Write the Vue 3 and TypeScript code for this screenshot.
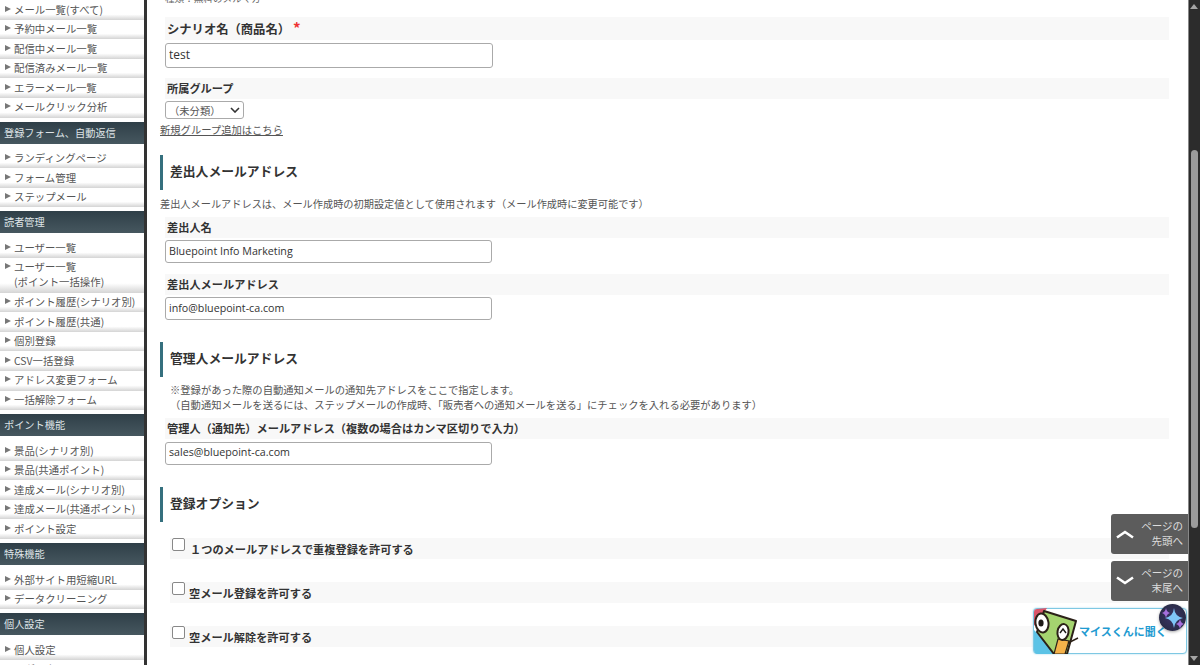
<script setup lang="ts">
type Group = { title?: string; items: string[][] }
const groups: Group[] = [
  { items: [['メール一覧(すべて)'], ['予約中メール一覧'], ['配信中メール一覧'], ['配信済みメール一覧'], ['エラーメール一覧'], ['メールクリック分析']] },
  { title: '登録フォーム、自動返信', items: [['ランディングページ'], ['フォーム管理'], ['ステップメール']] },
  { title: '読者管理', items: [['ユーザー一覧'], ['ユーザー一覧', '(ポイント一括操作)'], ['ポイント履歴(シナリオ別)'], ['ポイント履歴(共通)'], ['個別登録'], ['CSV一括登録'], ['アドレス変更フォーム'], ['一括解除フォーム']] },
  { title: 'ポイント機能', items: [['景品(シナリオ別)'], ['景品(共通ポイント)'], ['達成メール(シナリオ別)'], ['達成メール(共通ポイント)'], ['ポイント設定']] },
  { title: '特殊機能', items: [['外部サイト用短縮URL'], ['データクリーニング']] },
  { title: '個人設定', items: [['個人設定'], ['ログアウト']] }
]
const options = ['１つのメールアドレスで重複登録を許可する', '空メール登録を許可する', '空メール解除を許可する']
</script>

<template>
  <div class="page">
    <aside class="side">
      <section v-for="(g, i) in groups" :key="i">
        <h3 v-if="g.title" class="side-head">{{ g.title }}</h3>
        <ul class="side-list">
          <li v-for="(it, j) in g.items" :key="j" class="side-item">
            <span class="tri"></span>
            <span class="side-text"><span v-for="l in it" :key="l" class="line">{{ l }}</span></span>
          </li>
        </ul>
      </section>
    </aside>

    <main class="main">
      <p class="clipped">種類：無料のメルマガ</p>

      <div class="label first"><b>シナリオ名（商品名）</b><span class="req">*</span></div>
      <input class="field big" value="test" />

      <div class="label group"><b>所属グループ</b></div>
      <div class="select">（未分類）
        <svg width="10" height="6" viewBox="0 0 10 6"><path d="M1 1l4 4 4-4" fill="none" stroke="#333" stroke-width="1.6" /></svg>
      </div>
      <a class="link">新規グループ追加はこちら</a>

      <h2 class="sec s1">差出人メールアドレス</h2>
      <p class="note n1">差出人メールアドレスは、メール作成時の初期設定値として使用されます（メール作成時に変更可能です）</p>
      <div class="label small"><b>差出人名</b></div>
      <input class="field" value="Bluepoint Info Marketing" />
      <div class="label small next"><b>差出人メールアドレス</b></div>
      <input class="field" value="info@bluepoint-ca.com" />

      <h2 class="sec s2">管理人メールアドレス</h2>
      <p class="note n2">※登録があった際の自動通知メールの通知先アドレスをここで指定します。<br />（自動通知メールを送るには、ステップメールの作成時、「販売者への通知メールを送る」にチェックを入れる必要があります）</p>
      <div class="label small"><b>管理人（通知先）メールアドレス（複数の場合はカンマ区切りで入力）</b></div>
      <input class="field mgr" value="sales@bluepoint-ca.com" />

      <h2 class="sec s3">登録オプション</h2>
      <div class="opts">
        <div v-for="(o, i) in options" :key="o" class="opt">
          <span class="check"></span>
          <b class="opt-label" :class="{ wide: i === 0 }">{{ o }}</b>
        </div>
      </div>
    </main>

    <div class="scrollbar">
      <span class="arrow up"></span>
      <span class="thumb"></span>
      <span class="arrow down"></span>
    </div>

    <div class="jump top-j">
      <svg width="18" height="10" viewBox="0 0 18 10"><path d="M1 8.5L9 3l8 5.5" fill="none" stroke="#fff" stroke-width="2.6" /></svg>
      <span class="jump-text">ページの<br />先頭へ</span>
    </div>
    <div class="jump end-j">
      <svg width="18" height="10" viewBox="0 0 18 10"><path d="M1 1.5L9 7l8-5.5" fill="none" stroke="#fff" stroke-width="2.6" /></svg>
      <span class="jump-text">ページの<br />末尾へ</span>
    </div>

    <div class="ask">
      <svg class="mascot" width="48" height="46" viewBox="0 0 48 46">
        <path d="M0 22L24 46H4Q0 46 0 42Z" fill="#5cc3e6" />
        <path d="M0 18V4Q0 1 3 1L13 0L9 6Z" fill="#d9566a" />
        <path d="M10 3L42 13L33 46H20L3 24Z" fill="#a5d46f" stroke="#2b2118" stroke-width="2" stroke-linejoin="round" />
        <path d="M24 31L35 33L31 46H20Z" fill="#f4b24a" stroke="#2b2118" stroke-width="1.2" />
        <path d="M34 35L44 30" fill="none" stroke="#2b2118" stroke-width="1.5" />
        <ellipse cx="8" cy="15" rx="6.5" ry="9.5" transform="rotate(-8 8 15)" fill="#fff" stroke="#2b2118" stroke-width="2" />
        <ellipse cx="7" cy="15" rx="2.6" ry="3.6" fill="#1d1a17" />
        <ellipse cx="29" cy="24" rx="5.5" ry="8" transform="rotate(10 29 24)" fill="#fff" stroke="#2b2118" stroke-width="2" />
        <path d="M26 25l3-4 3 4" fill="none" stroke="#1d1a17" stroke-width="1.4" />
      </svg>
      <span class="ask-text">マイスくんに聞く</span>
      <span class="spark">
        <svg width="26" height="26" viewBox="0 0 26 26">
          <path d="M6 3Q6.6 7 10 8Q6.6 9 6 13Q5.4 9 2 8Q5.4 7 6 3Z" fill="#a56fdc" />
          <path d="M20 14Q20.6 18 24 19Q20.6 20 20 24Q19.4 20 16 19Q19.4 18 20 14Z" fill="#a56fdc" />
          <path d="M14 3Q14.8 11.5 23 13Q14.8 14.5 14 23Q13.2 14.5 5 13Q13.2 11.5 14 3Z" fill="#7fc6f7" />
        </svg>
      </span>
    </div>
  </div>
</template>

<style>
html, body { margin: 0; background: #fff; overflow: hidden; }
</style>

<style scoped>
.page {
  position: relative;
  display: flex;
  width: 1200px;
  height: 665px;
  overflow: hidden;
  background: #fff;
  color: #333;
  font-family: "Noto Sans CJK JP", "Noto Sans", sans-serif;
}
.side {
  flex: none;
  width: 144px;
  height: 665px;
  overflow: hidden;
  border-right: 3px solid #333;
  font-size: 10.4px;
  line-height: 15px;
}
.side-list { list-style: none; margin: 0 0 4px; padding: 0; }
.side-head {
  margin: 0 0 5px;
  height: 22px;
  padding-left: 4px;
  font-size: 10.2px;
  font-weight: 400;
  line-height: 21px;
  color: #dfe4e7;
  background: linear-gradient(#2f3f48, #46575f);
}
.side-item {
  display: flex;
  box-sizing: border-box;
  padding: 1.5px 0 3.1px 5px;
  background: linear-gradient(#fff 72%, #d4d4d4);
  color: #555;
}
.tri {
  flex: none;
  width: 0;
  height: 0;
  margin: 4px 3px 0 0;
  border-left: 6px solid #777;
  border-top: 3.5px solid transparent;
  border-bottom: 3.5px solid transparent;
}
.line { display: block; }
.main {
  flex: 1;
  min-width: 0;
  padding-left: 13px;
  padding-right: 31px;
  font-size: 10.3px;
}
.clipped { margin: -9px 0 0 5px; font-size: 9.6px; line-height: 14px; color: #666; }
.label {
  margin-left: 5px;
  background: #f8f8f8;
  padding-left: 2px;
  font-size: 11.2px;
  color: #333;
}
.label b { font-weight: 700; }
.first { margin-top: 12px; height: 23px; line-height: 25px; font-size: 12.3px; }
.req { color: #e33; margin-left: 3px; font-size: 15px; font-weight: 700; line-height: 0; }
.group { margin-top: 10px; height: 21px; line-height: 21px; }
.field {
  display: block;
  box-sizing: border-box;
  margin: 0 0 0 5px;
  width: 327px;
  height: 23px;
  padding: 0 3px 2px;
  border: 1px solid #aaa;
  border-radius: 3px;
  background: #fff;
  color: #333;
  font: 10.7px "Open Sans", "Noto Sans", sans-serif;
  outline: none;
}
.big { margin-top: 3px; font-size: 12px; height: 25px; width: 328px; }
.select {
  display: flex;
  align-items: center;
  justify-content: space-between;
  box-sizing: border-box;
  margin: 2px 0 0 5px;
  width: 79px;
  height: 18px;
  padding: 0 3px;
  border: 1px solid #aaa;
  border-radius: 3px;
  font-size: 10.3px;
  color: #555;
}
.link {
  display: block;
  margin-top: 3px;
  line-height: 16px;
  color: #555;
  text-decoration: underline;
}
.sec {
  margin: 0;
  height: 35px;
  border-left: 3px solid #35707e;
  padding-left: 7px;
  font-size: 12.8px;
  font-weight: 700;
  line-height: 31px;
  color: #333;
}
.s1 { margin-top: 17px; }
.s2, .s3 { margin-top: 22px; }
.note { margin: 0; color: #555; line-height: 15px; }
.n1 { margin-top: 6px; font-size: 10.2px; }
.n2 { margin: 5px 0 0 10px; }
.small { height: 21px; line-height: 21px; }
.n1 + .small { margin-top: 6px; }
.n2 + .small { margin-top: 6px; }
.small + .field { margin-top: 2px; }
.small + .mgr { margin-top: 2.5px; }
.next { margin-top: 11px; }
.opts { margin-top: 16px; margin-left: 10px; }
.opt {
  position: relative;
  height: 21px;
  margin-bottom: 23px;
  background: #f8f8f8;
  line-height: 22px;
  font-size: 11.2px;
}
.check {
  position: absolute;
  left: 2px;
  top: 0;
  box-sizing: border-box;
  width: 13px;
  height: 13px;
  border: 1px solid #888;
  border-radius: 2px;
  background: #fff;
}
.opt-label { margin-left: 19px; }
.wide { margin-left: 20px; }
.scrollbar {
  position: absolute;
  top: 0;
  right: 0;
  width: 12px;
  height: 665px;
  background: #2c2c2c;
  border-left: 1px solid #888;
  box-sizing: border-box;
}
.thumb {
  position: absolute;
  top: 150px;
  left: 2px;
  width: 7px;
  height: 378px;
  border-radius: 4px;
  background: #9b9b9b;
}
.arrow {
  position: absolute;
  left: 1px;
  width: 0;
  height: 0;
  border-left: 4px solid transparent;
  border-right: 4px solid transparent;
}
.up { top: 4px; border-bottom: 5px solid #a5a5a5; }
.down { bottom: 4px; border-top: 5px solid #a5a5a5; }
.jump {
  position: absolute;
  right: 12px;
  box-sizing: border-box;
  display: flex;
  align-items: center;
  justify-content: space-between;
  width: 77px;
  height: 40px;
  padding: 0 5px;
  border-radius: 3px 0 0 3px;
  background: #5c5c5c;
  color: #ddd;
  font-size: 10.5px;
  line-height: 15px;
  text-align: right;
}
.jump-text { margin-bottom: 3px; }
.top-j { top: 514px; }
.end-j { top: 561px; }
.ask {
  position: absolute;
  left: 1033px;
  top: 608px;
  box-sizing: border-box;
  width: 154px;
  height: 46px;
  border: 1px solid #7ec8e3;
  border-radius: 4px;
  background: #fff;
  box-shadow: 0 0 2px #9ed6ea;
}
.mascot { position: absolute; left: 0; top: -1px; }
.ask-text {
  position: absolute;
  left: 45px;
  top: 14px;
  font-size: 11px;
  font-weight: 700;
  line-height: 16px;
  color: #1f9bd1;
  white-space: nowrap;
}
.spark {
  position: absolute;
  left: 125px;
  top: -5px;
  display: flex;
  align-items: center;
  justify-content: center;
  width: 27px;
  height: 27px;
  border-radius: 50%;
  background: radial-gradient(#3b3566, #23283c);
  box-shadow: 0 1px 3px rgba(0, 0, 0, 0.35);
}
</style>
